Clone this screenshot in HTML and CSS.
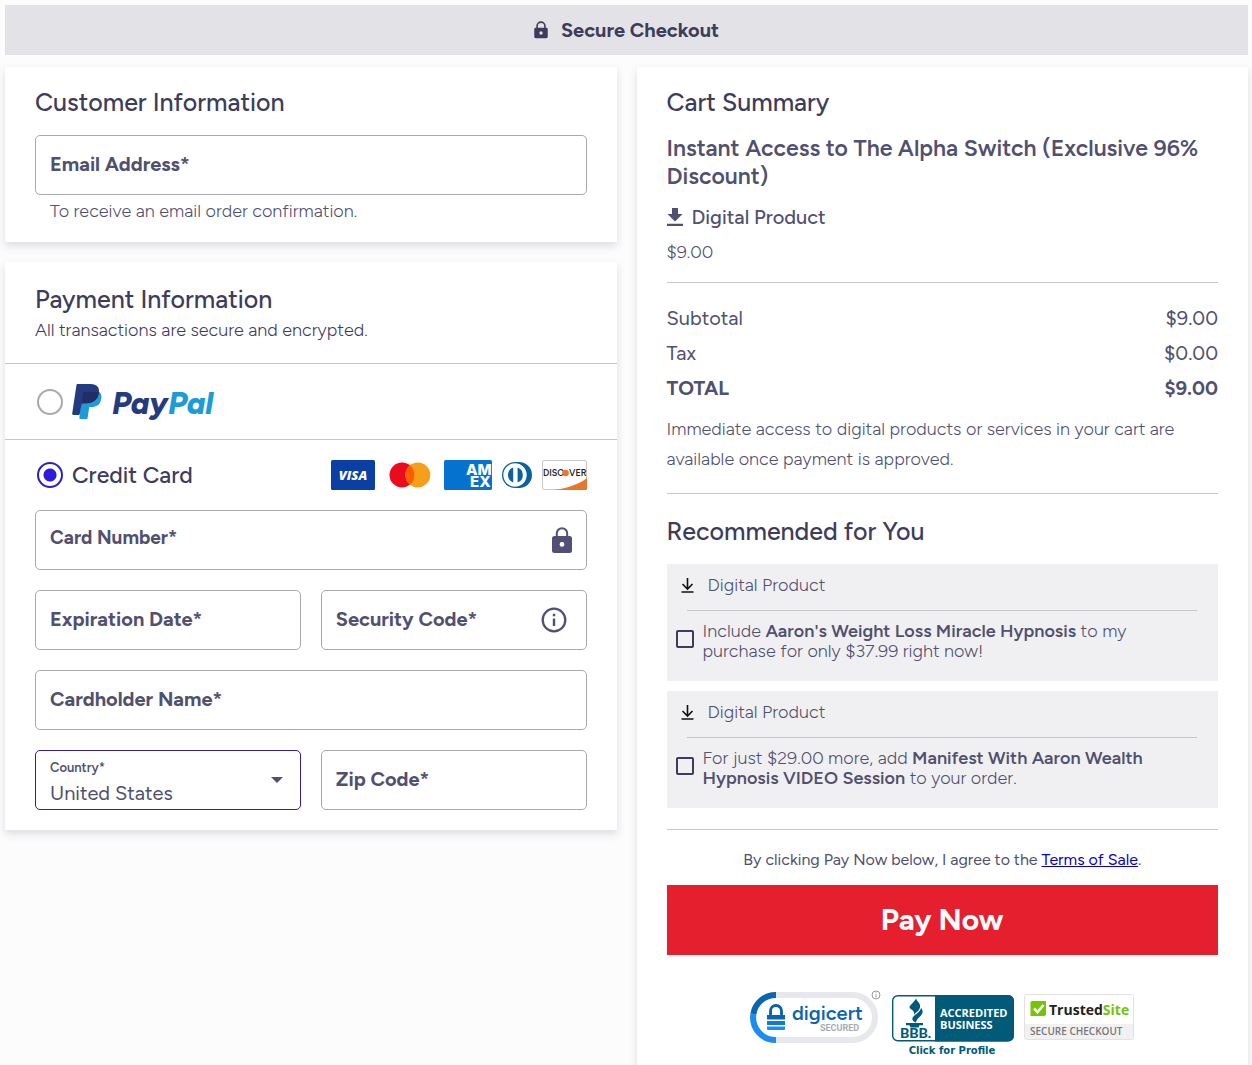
FILE: index.html
```
<!DOCTYPE html>
<html lang="en">
<head>
    <meta charset="UTF-8">
    <meta name="viewport" content="width=device-width, initial-scale=1.0">
    <title>Secure Checkout</title>
    <link rel="stylesheet" href="styles.css">
</head>
<body>
    <header class="top-bar">
        <svg class="top-lock" viewBox="0 0 16 20" width="14" height="18" aria-hidden="true">
            <path d="M3.500 8V5.500a4.500 4.500 0 0 1 9 0V8" fill="none" stroke="currentColor" stroke-width="1.800"/>
            <path fill-rule="evenodd" d="M2 7.500h12a1.700 1.700 0 0 1 1.700 1.700v8.600a1.700 1.700 0 0 1-1.700 1.700H2a1.700 1.700 0 0 1-1.700-1.700V9.200A1.700 1.700 0 0 1 2 7.500zM8 11.500a1.900 1.900 0 1 0 0 3.800 1.900 1.900 0 0 0 0-3.800z" fill="currentColor"/>
        </svg>
        <span>Secure Checkout</span>
    </header>

    <main class="checkout">
        <form class="column" id="checkoutForm">
            <!-- Customer details -->
            <section class="panel">
                <h2>Customer Information</h2>
                <div class="field">
                    <label for="email">Email Address*</label>
                    <input type="email" id="email" required>
                </div>
                <p class="hint">To receive an email order confirmation.</p>
            </section>

            <!-- Payment details -->
            <section class="panel">
                <h2 class="payment-title">Payment Information</h2>
                <p class="sub">All transactions are secure and encrypted.</p>

                <div class="method method-paypal">
                    <input type="radio" class="radio" name="method" id="paypal">
                    <label for="paypal">
                        <svg viewBox="0 -4 148 44" width="148" height="44" role="img" aria-label="PayPal">
                            <path d="M9.600 12.500L26 7c3.500 2 4 5.500 3 9-1.300 5-4.700 7-9.500 7h-2.300l-1.500 10.500c-.1 1-.7 1.500-1.600 1.500H8.500c-.8 0-1.200-.5-1.100-1.300z" fill="#1c9bd7"/>
                            <path d="M6 0h12.500c6.500 0 9.500 3.500 8.300 9.500C25.600 16 21 19.200 14.500 19.200h-3.300c-1 0-1.600.5-1.800 1.500L7.900 29.500c-.1.900-.7 1.500-1.600 1.500H1.400C.5 31 .1 30.400.2 29.600L4.400 1.400C4.500.5 5.100 0 6 0z" fill="#253b80"/>
                            <path d="M11.800 8h13.700c.6 0 1 .1 1.400.3-1 7.200-5.400 10.900-12.400 10.900h-3.300c-.7 0-1.200.2-1.500.6l1.200-10.400c.1-.9.200-1.300.9-1.400z" fill="#222d65"/>
                            <text class="paypal-word" x="40" y="30"><tspan fill="#253b80">Pay</tspan><tspan fill="#1c9bd7">Pal</tspan></text>
                        </svg>
                    </label>
                </div>

                <div class="method method-card">
                    <input type="radio" class="radio" name="method" id="card" checked>
                    <label for="card">Credit Card</label>
                    <div class="cards">
                        <svg class="visa" viewBox="0 0 44 30" width="44" height="30" role="img" aria-label="Visa">
                            <rect width="44" height="30" rx="1.500" fill="#0a3fa3"/>
                            <text class="visa-word" x="22" y="20" text-anchor="middle">VISA</text>
                        </svg>
                        <svg class="mastercard" viewBox="0 0 42 26" width="42" height="26" role="img" aria-label="Mastercard">
                            <circle cx="13" cy="13" r="12.500" fill="#eb0a1e"/>
                            <circle cx="28.800" cy="13" r="12.500" fill="#f79e1b"/>
                            <path d="M20.900 3.300a12.500 12.500 0 0 1 0 19.400 12.500 12.500 0 0 1 0-19.400z" fill="#ff5f00"/>
                        </svg>
                        <svg class="amex" viewBox="0 0 48 30" width="48" height="30" role="img" aria-label="American Express">
                            <rect width="48" height="30" rx="1.500" fill="#0572d0"/>
                            <text class="amex-word" x="22" y="15">AM</text>
                            <text class="amex-word" x="26" y="27">EX</text>
                        </svg>
                        <svg class="diners" viewBox="0 0 30 26" width="30" height="26" role="img" aria-label="Diners Club">
                            <path d="M13 0h4a13 13 0 0 1 0 26h-4a13 13 0 0 1 0-26z" fill="#0b6199"/>
                            <circle cx="13" cy="13" r="11.700" fill="#fff"/>
                            <path d="M11.200 5.500a8 8 0 0 0 0 15zM15.600 5.500a8 8 0 0 1 0 15z" fill="#0b6199"/>
                        </svg>
                        <svg class="discover" viewBox="0 0 45 30" width="45" height="30" role="img" aria-label="Discover">
                            <rect x=".5" y=".5" width="44" height="29" rx="1.500" fill="#fff" stroke="#c9c9c9"/>
                            <path d="M12 30c14-2 25-6 33-12v10.500a1.500 1.500 0 0 1-1.500 1.500z" fill="#e7772b"/>
                            <text class="discover-word" x="1" y="16">DISC</text>
                            <circle cx="23.500" cy="13" r="3.300" fill="#e7772b"/>
                            <text class="discover-word" x="27" y="16">VER</text>
                        </svg>
                    </div>
                </div>

                <div class="fields">
                    <div class="field wide card-number">
                        <label for="cardNumber">Card Number*</label>
                        <input type="text" id="cardNumber" required>
                        <svg class="field-icon" viewBox="0 0 20 26" width="20" height="26" aria-hidden="true">
                            <path d="M4.800 10V6.500a5.200 5.200 0 0 1 10.400 0V10" fill="none" stroke="currentColor" stroke-width="2"/>
                            <path fill-rule="evenodd" d="M2.500 9h15A2.500 2.500 0 0 1 20 11.500v12a2.500 2.500 0 0 1-2.500 2.500h-15A2.500 2.500 0 0 1 0 23.500v-12A2.500 2.500 0 0 1 2.500 9zM10 15a2.400 2.400 0 1 0 0 4.800 2.400 2.400 0 0 0 0-4.800z" fill="currentColor"/>
                        </svg>
                    </div>
                    <div class="field">
                        <label for="expiry">Expiration Date*</label>
                        <input type="text" id="expiry" required>
                    </div>
                    <div class="field security">
                        <label for="cvv">Security Code*</label>
                        <input type="text" id="cvv" required>
                        <svg class="field-icon" viewBox="0 0 26 26" width="26" height="26" aria-hidden="true">
                            <circle cx="13" cy="13" r="11.300" fill="none" stroke="currentColor" stroke-width="2.300"/>
                            <path d="M13 11.500V19M13 6.700v2.500" stroke="currentColor" stroke-width="2.400"/>
                        </svg>
                    </div>
                    <div class="field wide">
                        <label for="cardholder">Cardholder Name*</label>
                        <input type="text" id="cardholder" required>
                    </div>
                    <div class="field country">
                        <label for="country">Country*</label>
                        <select id="country">
                            <option>United States</option>
                            <option>Canada</option>
                            <option>United Kingdom</option>
                        </select>
                        <svg class="arrow" viewBox="0 0 12 6" width="12" height="6" aria-hidden="true">
                            <path d="M0 0h12L6 6z" fill="currentColor"/>
                        </svg>
                    </div>
                    <div class="field">
                        <label for="zip">Zip Code*</label>
                        <input type="text" id="zip" required>
                    </div>
                </div>
            </section>
        </form>

        <!-- Cart -->
        <aside class="panel cart">
            <h2>Cart Summary</h2>
            <h3>Instant Access to The Alpha Switch (Exclusive 96% Discount)</h3>
            <p class="kind">
                <svg viewBox="0 0 16 18" width="16" height="18" aria-hidden="true">
                    <path d="M5 0h6v6h4.500L8 13.500.5 6H5zM0 15.800h16V18H0z" fill="currentColor"/>
                </svg>
                Digital Product
            </p>
            <p class="price">$9.00</p>
            <hr>
            <dl class="totals">
                <div><dt>Subtotal</dt><dd>$9.00</dd></div>
                <div><dt>Tax</dt><dd>$0.00</dd></div>
                <div class="total"><dt>TOTAL</dt><dd>$9.00</dd></div>
            </dl>
            <p class="note">Immediate access to digital products or services in your cart are available once payment is approved.</p>
            <hr>

            <h2 class="offers-title">Recommended for You</h2>
            <div class="offers">
                <div class="offer">
                    <p class="offer-kind">
                        <svg viewBox="0 0 13 15" width="13" height="15" aria-hidden="true">
                            <path d="M6.500 0v10.500M1.500 6l5 5 5-5M.5 14h12" fill="none" stroke="#111" stroke-width="1.600"/>
                        </svg>
                        Digital Product
                    </p>
                    <div class="offer-choice">
                        <input type="checkbox" class="checkbox" id="offer1">
                        <label for="offer1">Include <b>Aaron's Weight Loss Miracle Hypnosis</b> to my purchase for only $37.99 right now!</label>
                    </div>
                </div>
                <div class="offer">
                    <p class="offer-kind">
                        <svg viewBox="0 0 13 15" width="13" height="15" aria-hidden="true">
                            <path d="M6.500 0v10.500M1.500 6l5 5 5-5M.5 14h12" fill="none" stroke="#111" stroke-width="1.600"/>
                        </svg>
                        Digital Product
                    </p>
                    <div class="offer-choice">
                        <input type="checkbox" class="checkbox" id="offer2">
                        <label for="offer2">For just $29.00 more, add <b>Manifest With Aaron Wealth Hypnosis VIDEO Session</b> to your order.</label>
                    </div>
                </div>
            </div>
            <hr>

            <p class="terms">By clicking Pay Now below, I agree to the <a href="#terms">Terms of Sale</a>.</p>
            <button type="submit" class="pay" form="checkoutForm">Pay Now</button>

            <div class="badges">
                <svg class="digicert" viewBox="0 0 132 54" width="132" height="54" role="img" aria-label="DigiCert Secured">
                    <rect x="3" y="5" width="122" height="45" rx="22.500" fill="#fff" stroke="#e6e8ee" stroke-width="6"/>
                    <path d="M26 5a22.500 22.500 0 0 0-22.600 19" fill="none" stroke="#0b66b0" stroke-width="6"/>
                    <path d="M3.400 24A22.500 22.500 0 0 0 26 50" fill="none" stroke="#1b8df0" stroke-width="6"/>
                    <path d="M20.500 26v-5a5.500 5.500 0 0 1 11 0v5" fill="none" stroke="#0b5ea8" stroke-width="2.800"/>
                    <path d="M17 25h18v4.500H17z" fill="#0b66b0"/>
                    <path d="M17 31h18v4H17z" fill="#1579cf"/>
                    <path d="M17 36.500h18V39a1 1 0 0 1-1 1H18a1 1 0 0 1-1-1z" fill="#1b8df0"/>
                    <text class="digicert-word" x="42" y="30">digicert</text>
                    <text class="digicert-secured" x="70" y="41">SECURED</text>
                    <circle cx="126" cy="5" r="4" fill="#fff" stroke="#999"/>
                    <path d="M126 4.500v3M126 2.500v1" stroke="#999"/>
                </svg>
                <svg class="bbb" viewBox="0 0 122 64" width="122" height="64" role="img" aria-label="BBB Accredited Business">
                    <rect x=".7" y="1.700" width="120.600" height="45" rx="5" fill="#fff" stroke="#005a78" stroke-width="1.400"/>
                    <path d="M43 1h73a6 6 0 0 1 6 6v34.500a6 6 0 0 1-6 6H43z" fill="#005a78"/>
                    <path d="M24 4.500c1 3 5 5 4 9-.6 3-3.500 4.500-6 7 .5-3-1-4-3.800-6C15.500 12 22 9 24 4.500zM29 14c3 3 1.500 6.500-1.500 9-2 1.800-3 3-3.500 5.500-3-1-4-2.500-3.500-4.500.7-3 7.500-5 8.500-10zM14 29h17v2.200h-3.500l-1 2.300h-8l-1-2.300H14z" fill="#005a78"/>
                    <text class="bbb-word" x="8" y="43.500">BBB.</text>
                    <text class="bbb-text" x="48" y="23">ACCREDITED</text>
                    <text class="bbb-text" x="48" y="35">BUSINESS</text>
                    <text class="bbb-link" x="60" y="60" text-anchor="middle">Click for Profile</text>
                </svg>
                <svg class="trusted" viewBox="0 0 110 46" width="110" height="46" role="img" aria-label="TrustedSite Secure Checkout">
                    <rect x=".5" y=".5" width="109" height="45" rx="2" fill="#fff" stroke="#e2e2e2"/>
                    <path d="M1 30h108v14a1 1 0 0 1-1 1H2a1 1 0 0 1-1-1z" fill="#f1f1f1"/>
                    <path d="M8 7h14v13a2 2 0 0 1-2 2H6.500V8.500A1.500 1.500 0 0 1 8 7z" fill="#76c308"/>
                    <path d="M10 14.500l3.500 3.500 6-7" fill="none" stroke="#fff" stroke-width="2.600"/>
                    <text class="trusted-word" x="25" y="21"><tspan fill="#222">Trusted</tspan><tspan fill="#76c308">Site</tspan></text>
                    <text class="trusted-secure" x="6" y="41">SECURE CHECKOUT</text>
                </svg>
            </div>
        </aside>
    </main>
</body>
</html>
```
FILE: styles.css
```
* {
    box-sizing: border-box;
}
body {
    display: flex;
    flex-direction: column;
    min-height: 100vh;
    margin: 0;
    padding: 5px 4px 0 5px;
    background-color: #fcfcfd;
    font-family: Figtree, Lato, sans-serif;
    font-size: 18px;
    font-weight: 300;
    line-height: 20px;
    color: #50506f;
}
h2, h3, p, dl, dd {
    margin: 0;
}
h2 {
    font-size: 25px;
    line-height: 32px;
    font-weight: 500;
    color: #3d3c5a;
}
h3 {
    font-size: 23px;
    line-height: 28px;
    font-weight: 600;
}
b {
    font-weight: 600;
}
svg {
    display: block;
    flex: none;
}
hr {
    height: 1px;
    margin: 0;
    border: none;
    background-color: #c6c6cc;
}
.top-bar {
    display: flex;
    align-items: center;
    justify-content: center;
    gap: 13px;
    height: 50px;
    background-color: #e3e3e7;
    font-size: 20px;
    font-weight: 700;
    color: #3d3c5a;
}
.checkout {
    display: grid;
    grid-template-columns: 1fr 1fr;
    gap: 20px;
    flex: 1;
    padding-top: 12px;
}
.column {
    display: flex;
    flex-direction: column;
    gap: 20px;
}
.panel {
    padding: 19px 30px 20px;
    background-color: #fff;
    box-shadow: 0 4px 8px rgba(60, 60, 90, 0.16);
}

/* Form fields */
.field {
    display: grid;
    align-items: center;
    height: 60px;
    border: 1px solid #a9a9ad;
    border-radius: 5px;
}
.field > * {
    grid-area: 1 / 1;
}
.field label {
    padding: 0 14px 2px;
    font-size: 20px;
    font-weight: 700;
    pointer-events: none;
}
.field input, .field select {
    width: 100%;
    height: 100%;
    padding: 0 14px;
    border: none;
    background: transparent;
    font: inherit;
    font-size: 20px;
    font-weight: 400;
    color: #50506f;
    outline: none;
}
.field-icon {
    justify-self: end;
    color: #524f76;
}
.card-number .field-icon {
    margin-right: 14px;
}
.card-number label {
    padding-bottom: 4px;
    font-size: 19px;
}
.security .field-icon {
    margin-right: 19px;
}
.panel > .field {
    margin-top: 17px;
}
.hint {
    padding: 6px 15px 1px;
}
.payment-title {
    margin-top: 2px;
}
.sub {
    padding: 5px 0 23px;
    color: #3d3c5a;
}
.method {
    display: flex;
    align-items: center;
    gap: 9px;
    margin: 0 -30px;
    padding: 0 30px 0 32px;
    border-top: 1px solid #c6c6cc;
    font-size: 23px;
    font-weight: 500;
    color: #3d3c5a;
}
.method-paypal {
    height: 76px;
}
.method-card {
    height: 71px;
}
.radio {
    appearance: none;
    width: 26px;
    height: 26px;
    margin: 0;
    border: 2px solid #a9a9ad;
    border-radius: 50%;
}
.radio:checked {
    border-color: #2f1fc0;
    background: radial-gradient(circle, #2d1bdc 6px, #fff 7px);
}
.cards {
    display: flex;
    align-items: center;
    margin-left: auto;
}
.mastercard {
    margin: 0 13px 0 14px;
}
.diners {
    margin: 0 10px;
}
.fields {
    display: grid;
    grid-template-columns: 1fr 1fr;
    gap: 20px;
}
.wide {
    grid-column: 1 / -1;
}
.country {
    border-color: #2f1fa0;
}
.country label {
    align-self: start;
    padding-top: 7px;
    font-size: 13px;
    font-weight: 600;
}
.country select {
    appearance: none;
    padding-top: 25px;
}
.arrow {
    justify-self: end;
    margin-right: 17px;
}

/* Cart */
.kind {
    display: flex;
    align-items: center;
    gap: 9px;
    padding: 17px 0 15px;
    font-size: 20px;
    font-weight: 500;
}
.cart h3 {
    margin-top: 16px;
}
.price {
    padding-bottom: 20px;
}
.totals {
    padding: 18px 0 8px;
    font-size: 20px;
    font-weight: 400;
    line-height: 35px;
}
.totals div {
    display: flex;
    justify-content: space-between;
}
.totals .total {
    font-weight: 700;
}
.note {
    padding-bottom: 19px;
    line-height: 30px;
}
.offers-title {
    margin: 21px 0 17px;
}
.offers {
    display: flex;
    flex-direction: column;
    gap: 10px;
    padding-bottom: 21px;
}
.offer {
    padding-bottom: 20px;
    background-color: #f0f0f3;
}
.offer-kind {
    display: flex;
    align-items: center;
    gap: 14px;
    height: 46px;
    padding: 0 14px 4px;
}
.offer-choice {
    display: grid;
    grid-template-columns: 18px 1fr;
    column-gap: 9px;
    padding: 0 10px 0 9px;
}
/* Rule under the product type, inset from the box edges */
.offer-choice::before {
    content: "";
    grid-column: 1 / -1;
    height: 1px;
    margin: 0 11px 10px;
    background-color: #c6c6cc;
}
.offer-choice label {
    padding-right: 40px;
}
.checkbox {
    appearance: none;
    width: 18px;
    height: 18px;
    margin: 9px 0 0;
    border: 2px solid #3d3c5a;
    border-radius: 2px;
}
.terms {
    padding: 20px 0 15px;
    font-size: 16px;
    font-weight: 400;
    text-align: center;
}
.terms a {
    color: #0a00c0;
}
.pay {
    display: block;
    width: 100%;
    height: 70px;
    border: none;
    background-color: #e61f2e;
    font: inherit;
    font-size: 30px;
    font-weight: 700;
    color: #fff;
    cursor: pointer;
}
.badges {
    display: flex;
    align-items: flex-start;
    justify-content: center;
    gap: 10px;
    padding-top: 35px;
}
.bbb, .trusted {
    margin-top: 4px;
}

/* Lettering inside the logos */
.paypal-word {
    font: italic 800 31px Figtree, Lato, sans-serif;
}
.visa-word {
    font: italic 800 13px "Open Sans", sans-serif;
    fill: #fff;
}
.amex-word {
    font: 800 15px Inter, sans-serif;
    fill: #fff;
}
.discover-word {
    font: 600 9px Figtree, Lato, sans-serif;
    fill: #222;
}
.digicert-word {
    font: 600 20px Figtree, Lato, sans-serif;
    fill: #0b66b0;
}
.digicert-secured {
    font: 700 9px Roboto, sans-serif;
    fill: #a8abb3;
}
.bbb-word {
    font: 900 14px Lato, sans-serif;
    fill: #005a78;
}
.bbb-text {
    font: 700 11px "Open Sans", sans-serif;
    fill: #fff;
}
.bbb-link {
    font: 700 10px "DejaVu Sans", sans-serif;
    fill: #005a78;
}
.trusted-word {
    font: 700 14px "Open Sans", sans-serif;
}
.trusted-secure {
    font: 600 10px "Open Sans", sans-serif;
    fill: #777;
}
```
